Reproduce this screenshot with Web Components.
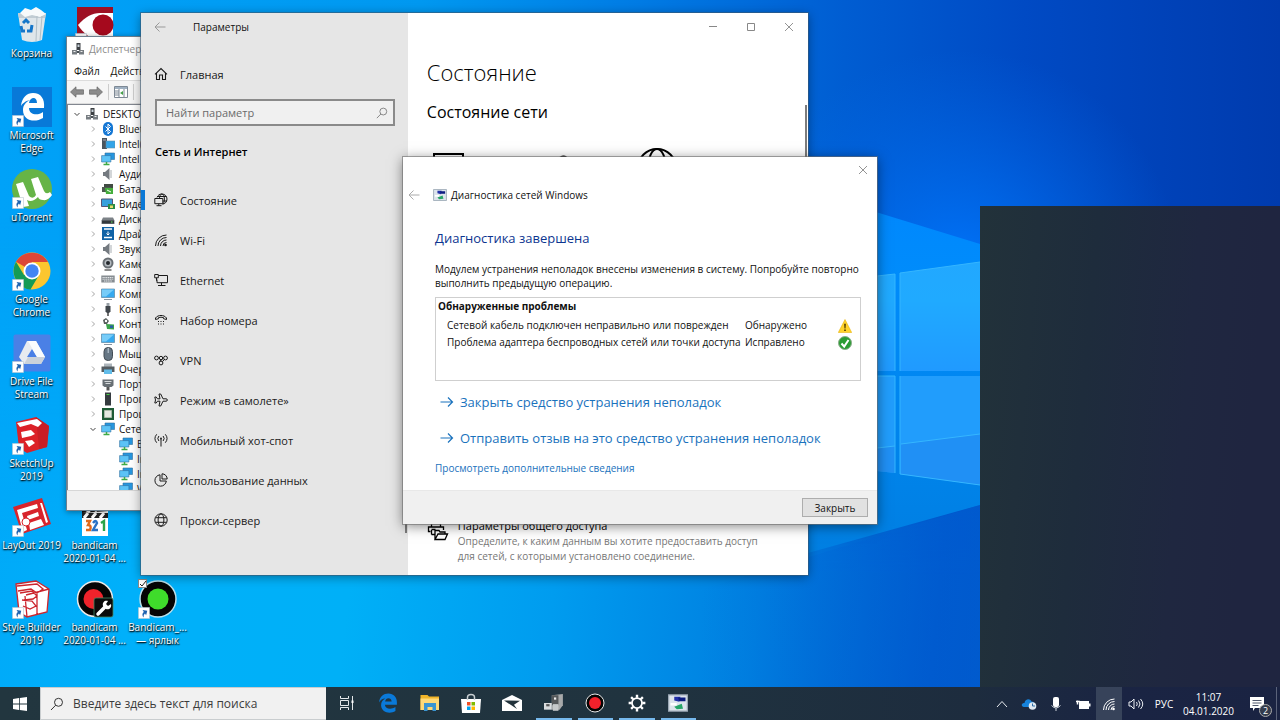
<!DOCTYPE html>
<html lang="ru">
<head>
<meta charset="utf-8">
<title>Рабочий стол</title>
<style>
html, body { margin: 0; height: 100%; overflow: hidden; }
body { font-family: "Open Sans", "Noto Sans", sans-serif; font-size: 11px; color: #111; }
</style>
</head>
<body>
<desk-shell></desk-shell>
<script>
const ICONS = {
  back: ['0 0 12 12', '<path d="M11.5 6H1M5.500 1.500 1 6l4.500 4.500" fill="none" stroke="currentColor"/>'],
  min: ['0 0 10 10', '<path d="M1 4.500h8" stroke="currentColor"/>'],
  max: ['0 0 10 10', '<path d="M1.500 1.500h7v7h-7z" fill="none" stroke="currentColor"/>'],
  close: ['0 0 10 10', '<path d="m1 1 8 8m0-8-8 8" fill="none" stroke="currentColor" stroke-width=".9"/>'],
  home: ['0 0 14 14', '<path d="M1 7.300 7 1.500l6 5.800M2.500 6v6.500h3V8h3v4.500h3V6" fill="none" stroke="currentColor" stroke-width="1.100"/>'],
  search: ['0 0 14 14', '<circle cx="8.500" cy="5.300" r="4" fill="none" stroke="currentColor"/><path d="M5.700 8.200 1 13" stroke="currentColor"/>'],
  status: ['0 0 14 14', '<g fill="none" stroke="currentColor"><path d="M3 4.500C3.800 2.200 5.600 1 7.800 1c3 0 5.200 2.200 5.200 5s-2 5-4.500 5.200M5.500 5C5.700 2.600 6.600 1 7.900 1s2.500 2 2.500 5-.7 4.500-1.400 5M3.300 3.500h9M9 8h4"/><path d="M.8 5.500h8v5.200h-8zM2.500 12.700h5M4.800 10.700v2"/></g>'],
  wifi: ['0 0 14 14', '<g fill="none" stroke="currentColor"><path d="M1.500 13A11 11 0 0 1 12.500 2M4 13a8.500 8.500 0 0 1 8.500-8.500M6.500 13a6 6 0 0 1 6-6"/><path d="M9 13a3.500 3.500 0 0 1 3.500-3.500"/></g><circle cx="11.500" cy="12" r="1.300" fill="currentColor"/>'],
  ethernet: ['0 0 14 14', '<g fill="none" stroke="currentColor"><path d="M4.500 2.500h9v7.200H3V6.500M7.500 9.700v2.800M4 12.500h7.500M.7 1.500h3.600v3.300H.7zM2.500 4.800v3"/></g>'],
  dial: ['0 0 14 14', '<path d="M1.500 6.500V5C4 1.600 10 1.600 12.500 5v1.500l-3-.8V4.600a8 8 0 0 0-5 0v1.100z" fill="none" stroke="currentColor"/><path d="M4 8.500h1M6.500 8.500h1M9 8.500h1M4 11h1M6.500 11h1M9 11h1" stroke="currentColor"/>'],
  vpn: ['0 0 14 14', '<g fill="none" stroke="currentColor"><circle cx="2.500" cy="5" r="1.900"/><circle cx="7" cy="5" r="1.700"/><circle cx="11.500" cy="5" r="1.900"/><circle cx="7" cy="10" r="1.900"/><path d="m8.500 6.200-3 2.200M10.300 6.500 8.500 8.600"/></g>'],
  plane: ['0 0 14 14', '<path d="M13.400 7c0-.8-.7-1.200-1.400-1.200H9L6.700 1H5l1 4.800H3.500L2.200 4H.8l.7 3-.7 3h1.400l1.300-1.800H6L5 13h1.700L9 8.200h3c.7 0 1.400-.4 1.400-1.200z" fill="none" stroke="currentColor"/>'],
  hotspot: ['0 0 14 14', '<g fill="none" stroke="currentColor"><path d="M2.700 1.300a6.500 6.500 0 0 0 0 8.400M11.300 1.300a6.500 6.500 0 0 1 0 8.400M4.900 3a3.800 3.800 0 0 0 0 5M9.100 3a3.800 3.800 0 0 1 0 5M7 5.500v8"/></g><circle cx="7" cy="5.500" r=".9" fill="currentColor"/>'],
  data: ['0 0 14 14', '<g fill="none" stroke="currentColor"><path d="M6 1.800A5.700 5.700 0 1 0 12.300 8H6z"/><path d="M8 .8V6h5.200A5.200 5.200 0 0 0 8 .8z"/></g>'],
  globe: ['0 0 14 14', '<g fill="none" stroke="currentColor"><circle cx="7" cy="7" r="6.200"/><ellipse cx="7" cy="7" rx="2.900" ry="6.200"/><path d="M1.500 4.700h11M1.500 9.300h11"/></g>'],
  laptopBig: ['0 0 32 24', '<path d="M1 21V1h29v20" fill="none" stroke="#000" stroke-width="2"/>'],
  routerBig: ['0 0 20 20', '<path d="M2 5Q10-4 16 5v12H2z" fill="#000"/>'],
  globeBig: ['0 0 40 40', '<g fill="none" stroke="#000" stroke-width="2"><circle cx="20" cy="20" r="19"/><ellipse cx="20" cy="20" rx="9" ry="19"/><path d="M4 11h32M1 20h38"/></g>'],
  share: ['0 0 22 20', '<g fill="none" stroke="#000" stroke-width="1.300"><path d="M4.500 5V1.500h9V5M3.500 9.500H1.500v-4.500h15v3M4.500 7.500h4"/><path d="M4.500 12.500H8M4.500 8v4.500"/><path d="M8 17.500v-9h4l1 1.500h5v2M8 17.500l3-5.500h9.500L18 17.500z"/></g>'],
  diag: ['0 0 16 14', '<path d="M.5.500h15v13H.5z" fill="#dde4ec" stroke="#9aa7b4"/><path d="M5 2h5l-1 4-4-1z" fill="#2230a8"/><path d="M8 2.500h6v3H9z" fill="#0c1c80"/><path d="M5 10 11 7.500l1 4-5 .5z" fill="#27a567"/><path d="M2 7h5v2H2z" fill="#fff"/>'],
  goarrow: ['0 0 14 12', '<path d="M.5 6h12M8 1.500 12.500 6 8 10.500" fill="none" stroke="currentColor" stroke-width="1.200"/>'],
  warn: ['0 0 14 14', '<path d="M7 .5 13.700 13.500H.3z" fill="#ffd32c" stroke="#e8b410" stroke-width=".6"/><path d="M6.200 4.800h1.600L7.500 9.500h-1zM6.200 10.500h1.600V12H6.200z" fill="#443000"/>'],
  ok: ['0 0 14 14', '<circle cx="7" cy="7" r="6.500" fill="#2b9c33" stroke="#8cae8c"/><path d="m3.500 7.500 2.700 3L10.500 4" fill="none" stroke="#fff" stroke-width="2"/>'],
  fwdGrey: ['0 0 14 12', '<path d="M13.500 6 8 .8v3H.5v4.400H8v3z" fill="#8b8b8b" stroke="#666" stroke-width=".7"/>'],
  backGrey: ['0 0 14 12', '<path d="M.5 6 6 .8v3h7.500v4.400H6v3z" fill="#8b8b8b" stroke="#666" stroke-width=".7"/>'],
  panel: ['0 0 14 12', '<path d="M.5.500h13v11H.5z" fill="#fff" stroke="#7d8894"/><path d="M1 1h12v2H1z" fill="#9fb0c1"/><path d="M5 3v8M5 5H1M5 7H1M5 9H1M10 3v8" stroke="#7d8894"/><path d="m9 5-3 2 3 2z" fill="#43a047"/>'],
  pc: ['0 0 14 14', '<path d="M5.500 1h4v7h-4z" fill="#3b3f43"/><path d="M6.500 2.500h2V5h-2z" fill="#c9d3da"/><path d="M1 8h5v4.500H1zM8 8h5v4.500H8z" fill="#777d82"/><path d="M6 9h2v2H6z" fill="#4b5054"/><path d="M2.500 9.500h2M9.500 9.500h2" stroke="#eee"/>'],
  bt: ['0 0 14 14', '<rect x="2" y="0" width="10" height="14" rx="5" fill="#1577d4"/><path d="m4.500 4.500 5 5L7 12V2l2.500 2.500-5 5" fill="none" stroke="#fff"/>'],
  mon: ['0 0 14 14', '<path d="M.5 2h13v8.500H.5z" fill="#36a9ef" stroke="#5c88a5" stroke-width=".7"/><path d="M1 2.500h12L5 9.500H1z" fill="#77ccf8"/><path d="M3 12.500h8" stroke="#8995a0"/>'],
  tower: ['0 0 14 14', '<path d="M1 1h5v11H1z" fill="#4a555e"/><path d="M2 3h3" stroke="#aab"/><path d="M5 4h9v7H5z" fill="#33a4e8" stroke="#6690aa" stroke-width=".6"/>'],
  net: ['0 0 14 14', '<path d="M4 1h9.500v6.500H4z" fill="#2696df" stroke="#306f9d" stroke-width=".6"/><path d="M.6 3.600h9.300V10H.6z" fill="#5cc3f6" stroke="#306f9d" stroke-width=".6"/><path d="M5.500 10v2M2.500 12.500h6" stroke="#3faa47" stroke-width="1.500"/>'],
  speaker: ['0 0 14 14', '<path d="M2 5h2l4.500-4v12L4 9H2z" fill="#747a80"/><path d="M10 3v8" stroke="#a7adb2"/>'],
  battery: ['0 0 14 14', '<path d="M3 2h9v4H3z" fill="#414b43"/><path d="M1 5h9v5H1z" fill="#4e5a50"/><path d="M4 6h8v6H5z" fill="#46ae3d"/><path d="m6 8 4 2" stroke="#fff"/>'],
  video: ['0 0 14 14', '<path d="M.5 2h11v7.500H.5z" fill="#34a0dd" stroke="#557"/><path d="M7 7h7v5H7z" fill="#2a8b44"/><path d="M9 8.500h3V11H9z" fill="#e9d96f"/>'],
  disk: ['0 0 14 14', '<path d="M2 5.500h10l1.500 3V12H.5V8.500z" fill="#7c8287"/><path d="M1 8.500h12v3H1z" fill="#34383c"/><path d="M10 10h1.500" stroke="#6e6"/>'],
  driver: ['0 0 14 14', '<path d="M1 0h12v13H1z" fill="#1163a6"/><path d="M3 2h8M3 10.500h8" stroke="#fff" stroke-width="1.500"/><path d="M7 4.500v3M5.500 6.500 7 8l1.500-1.500" stroke="#fff" fill="none"/>'],
  cam: ['0 0 14 14', '<circle cx="7" cy="6" r="5.500" fill="#686e73"/><circle cx="7" cy="6" r="3.500" fill="#b5bbc0"/><circle cx="7" cy="6" r="2" fill="#24282c"/><path d="M3.500 13h7" stroke="#666" stroke-width="1.500"/>'],
  kbd: ['0 0 14 14', '<path d="M.3 3.500h13.400v7H.3z" fill="#868c91"/><path d="M1.500 5.500h11M1.500 7.200h11M3 9h8" stroke="#e1e4e6" stroke-dasharray="1.300 .5"/>'],
  usb: ['0 0 14 14', '<path d="M5.500 1h3v3h-3z" fill="#98a0a6"/><path d="M4.500 4h5v5.500L8 11H6l-1.500-1.500z" fill="#41474c"/><path d="M7 11v3" stroke="#444" stroke-width="1.500"/>'],
  ctrl: ['0 0 14 14', '<path d="m2 3 3-2 3 3-2 3H3z" fill="#565d5a"/><circle cx="5" cy="4" r="1.200" fill="#fff"/><path d="m5 7 8 .5v5L6 12z" fill="#3aa24a"/><path d="M9 8.500h3V11H9z" fill="#2a5ea8"/>'],
  mouse: ['0 0 14 14', '<rect x="3" y=".5" width="8.500" height="13" rx="4" fill="#667684" stroke="#424b53"/><path d="M7.200 1v5" stroke="#c7d3dc"/>'],
  printer: ['0 0 14 14', '<path d="M3 1.500h8V5H3z" fill="#aeb6bc"/><path d="M.5 4.500h13v5.500H.5z" fill="#555c61"/><path d="M3 7.500h8V12H3z" fill="#62bdea"/>'],
  port: ['0 0 14 14', '<path d="M1.500 2.500h11v6l-2 1.500h-7l-2-1.500z" fill="#686f74"/><path d="M3.500 4.500h7M4.500 6.500h5" stroke="#d4d8da"/><path d="M7 10v3.500" stroke="#555" stroke-width="3"/>'],
  soft: ['0 0 14 14', '<path d="M4 .5h6v13H4z" fill="#353b3f"/><path d="M5.500 2.500h3" stroke="#4ad04a"/>'],
  cpu: ['0 0 14 14', '<path d="M1 1h12v12H1z" fill="#1f5b35"/><path d="M3.500 3.500h7v7h-7z" fill="#e4e9e0" stroke="#a9b9a6"/>'],
  chev: ['0 0 8 8', '<path d="m3 1.500 2.500 2.500L3 6.500" fill="none" stroke="#999" stroke-width=".9"/>'],
  chevDown: ['0 0 8 8', '<path d="m1.500 3 2.500 2.500L6.500 3" fill="none" stroke="#444"/>'],
  bin: ['0 0 40 40', '<path d="M6 8h28l-4 27q-10 4-20 0z" fill="#dfe6ea"/><path d="M6 8h28l-1 5H7z" fill="#c1ccd3"/><path d="m8 8 5-5 6 2 5-3 5 3 5 4-6 3-8-2-7 2z" fill="#f7fafb"/><path d="M25 11l-1 25M30 11l-2 24" stroke="#b3c0c8"/><g fill="none" stroke="#1476c9" stroke-width="3"><path d="m11 18 3-3 3 3M20 20l-1 6h-4M9 21l1 5h3"/></g>'],
  abbyy: ['0 0 40 40', '<path d="M2 2h36v38H2z" fill="#9e1023"/><path d="M3 20C10 12 17 8 25 8h13v28H27C16 35 8 28 3 20z" fill="#fff"/><circle cx="28" cy="20" r="10.500" fill="#a5091d"/>'],
  edgeTile: ['0 0 40 40', '<path d="M0 0h40v40H0z" fill="#0879d8"/><path d="M9 19C10 10 15 6 21 6c8 0 12 6 11 15H17c0 7 9 8 14 4v6c-8 5-20 3-20-8 0-5 3-8 7-10-5 1-8 4-9 6zm8-3h8c0-7-7-6-8 0z" fill="#fff"/>'],
  utorrent: ['0 0 40 40', '<circle cx="20" cy="20" r="20" fill="#66b447"/><path d="m4 15 7-2 6 14q4 4 7-1L19 10l7-2 6 14q2 4 6 1l2 3q-4 6-9 5-4 0-5-3-6 6-11 3l2 6-6 1z" fill="#fff"/>'],
  chrome: ['0 0 40 40', '<circle cx="20" cy="20" r="18.500" fill="#fbc62f"/><path d="M20 20 4 10.800A18.500 18.500 0 0 1 36 11H20z" fill="#dc4637"/><path d="M4 10.800A18.500 18.500 0 0 0 18.500 38.400L27 24 20 20 12 24z" fill="#149b56"/><circle cx="20" cy="20" r="8.500" fill="#fff"/><circle cx="20" cy="20" r="6.700" fill="#4285f4"/>'],
  drive: ['0 0 40 40', '<rect x="1.500" y="1.500" width="37" height="37" rx="2" fill="#4a80e6"/><path d="M15 8h9l9 16-4 7H12l-5-7z" fill="#e7ebf0"/><path d="m20 16 5 8H15z" fill="#4a80e6"/><path d="m24 8 9 16h-8l-9-16z" fill="#fafcfd"/><path d="m12 31 4-7h17l-4 7z" fill="#cbd2da"/>'],
  sketchup: ['0 0 40 40', '<path d="m4 7 20-5 13 9-2 21-20 6-8-5z" fill="#dc2128"/><path d="m24 2 13 9-2 21-8 2z" fill="#c91d25"/><path d="m5 8 20-4 5 4-4 4-7-3-11 3zM9 17l10-2 4 4-4 2-9 2zM13 26l7-1 3 3-6 4z" fill="#fff"/>'],
  layout: ['0 0 40 40', '<path d="m1 10 29-9 9 26-29 10z" fill="#d8242c"/><path d="m5 13 20-6 1 4-16 5 5 17-4 2zM15 19l11-4 1 4-11 4zM17 26l12-4 3 6-14 5zM28 6l2 0 6 19-2 1z" fill="#fff"/><circle cx="14" cy="25" r="4" fill="#fff" stroke="#d8242c"/>'],
  style: ['0 0 40 40', '<path d="m4 5 20-3 13 8-2 23-20 5-8-5z" fill="#fff"/><g fill="none" stroke="#cc252d" stroke-width="1.300"><path d="m4 5 20-3 13 8-2 23-20 5-8-5zM5 7l20-2 6 5-6 4-6-4-13 2M8 14l12-2 5 5-4 3-9 1M10 21l10 1 4 5-6 3-7-3M37 10 14 16M13 17l2 21M25 14v21"/></g>'],
  clip321: ['0 0 40 40', '<path d="M7 9h26v30H7z" fill="#fff"/><path d="m7 12 26-5v7l-26 2z" fill="#111"/><path d="m10 12 5 3M17 11l5 3M24 9l6 4" stroke="#fff" stroke-width="3"/><path d="M7 16h26v5H7z" fill="#222"/><path d="m9 21 4-5M17 21l4-5M25 21l4-5" stroke="#fff" stroke-width="3"/><g fill="none" stroke-width="2.400"><path d="M11 24h4l-2 4q4 0 2 5h-4" stroke="#e16a1b"/><path d="M18 26q3-4 4 0l-4 7h5" stroke="#2b72c4"/><path d="m26 26 3-2v10" stroke="#2aa449"/></g>'],
  rec: ['0 0 40 40', '<circle cx="20" cy="20" r="18" fill="#050505" stroke="#e9e9e9" stroke-width="2"/><circle cx="20" cy="20" r="12" fill="#f2212b"/>'],
  recTool: ['0 0 40 40', '<circle cx="20" cy="20" r="17.500" fill="#050505" stroke="#e9e9e9" stroke-width="1.500"/><circle cx="18.500" cy="20" r="10" fill="#ef232b"/><rect x="19" y="19" width="19" height="19" rx="2" fill="#0b0b0b" stroke="#486" stroke-width=".8"/><path d="m23 35 7-7" stroke="#fff" stroke-width="3.500" stroke-linecap="round"/><path d="M28 27c-1-4 2-6 5-5l-2 3 2 2 3-2c1 4-2 6-5 5z" fill="#fff"/>'],
  recGreen: ['0 0 40 40', '<circle cx="20" cy="20" r="18" fill="#050505" stroke="#b9dfea" stroke-width="1.500"/><circle cx="20" cy="20" r="10.500" fill="#3fdc2b"/>'],
  link: ['0 0 12 12', '<path d="M.5.500h11v11H.5z" fill="#fff" stroke="#b8c6d2" stroke-width=".6"/><path d="M3 9.500C3 6.500 4.500 5 6.500 5V2.800L10 6 6.500 9V7Q4.500 7 3 9.500z" fill="#1e63b0" transform="rotate(-35 6 6)"/>'],
  win: ['0 0 14 14', '<path d="m0 2 6-.9v5.500H0zM6.800 1 14 0v6.600H6.800zM0 7.400h6v5.500L0 12zM6.800 7.400H14V14l-7.200-1z" fill="#fff"/>'],
  taskview: ['0 0 16 14', '<g fill="none" stroke="#e4e8ea"><path d="M1.500 0v2.500h8V0M1.500 4.500h8v5h-8zM1.500 14v-2.500h8V14M13.500 0v14"/></g><path d="M12.500 4.500h2v2.500h-2z" fill="#fff"/>'],
  edge: ['0 0 18 18', '<path d="M1 8.500C1.500 3 5 .5 9.300.5c5 0 8 3.500 7.700 8.500v1.500H6.200c.3 4 5.500 4.500 9.500 2.200v3.600C11 19 3.500 18 2.800 11.500 2.600 8.500 4 6.300 6.500 5 4 5.200 2.200 6.300 1 8.500zM6.400 7.700h5.900c-.1-4-5.500-4-5.900 0z" fill="#0a79d8"/>'],
  folder: ['0 0 20 16', '<path d="M.5 0h7l1.500 1.500h10V15H.5z" fill="#f0b429"/><path d="M.5 3.500h18.500V15H.5z" fill="#ffd977"/><path d="M4 8h12v8h-3.500v-4h-5v4H4z" fill="#3a95d2"/>'],
  store: ['0 0 20 20', '<path d="M0 6h20l-1 14H1z" fill="#fff"/><path d="M6.500 7V4.500c0-4 7-4 7 0V7" fill="none" stroke="#c8ced1" stroke-width="1.500"/><path d="M6 9h3.500v3.500H6z" fill="#f04f24"/><path d="M10.500 9H14v3.500h-3.500z" fill="#80bb00"/><path d="M6 13.500h3.500V17H6z" fill="#00a3ef"/><path d="M10.500 13.500H14V17h-3.500z" fill="#ffb900"/>'],
  mail: ['0 0 20 16', '<path d="M0 5 10 0l10 5v11H0z" fill="#fff"/><path d="m2 5.500 16 .2-6 4.100 3 4.200z" fill="#20313a"/>'],
  devmgr: ['0 0 18 16', '<path d="M7 1 17 0v10l-3 4H7z" fill="#a7a9aa"/><path d="M7 1h6v9H7z" fill="#55585a"/><path d="M9 3h2v2H9z" fill="#eee"/><path d="M0 8h7v6H0z" fill="#d9dcde"/><path d="M8 9h5v6H8z" fill="#c6c9ca"/><path d="M2 10h3" stroke="#555" stroke-width="2"/>'],
  gear: ['0 0 16 16', '<circle cx="8" cy="8" r="4" fill="none" stroke="#fff" stroke-width="1.400"/><path d="M8 1.300v2.500M8 12.200v2.500M1.300 8h2.500M12.200 8h2.500M3.300 3.300 5 5M11 11l1.700 1.700M3.300 12.700 5 11M11 5l1.700-1.700" stroke="#fff" stroke-width="1.900"/>'],
  up: ['0 0 12 8', '<path d="m1 7 5-5.500L11 7" fill="none" stroke="#e8ecf0"/>'],
  onedrive: ['0 0 16 12', '<path d="M3 9C-.5 8.500.5 4.500 3.500 5 4 1 9 0 10.500 3.500 13 3.500 14 5 13.500 9z" fill="#1683dc"/><circle cx="11.500" cy="8" r="3.800" fill="#dfe8f0"/><path d="M11.500 5.500V8H14" stroke="#2c6ca5" fill="none"/>'],
  mic: ['0 0 12 16', '<rect x="3" y="1" width="6" height="10" rx="2" fill="#fff"/><path d="M1.500 9.500q4.500 5 9 0M6 12v3" stroke="#ccd2da" fill="none"/>'],
  batt: ['0 0 16 12', '<path d="M4 3h10v8H4z" fill="#fff"/><path d="M14 5.500h1.500v3H14z" fill="#fff"/><path d="M2.500 2.500v4M1 3.500h4" stroke="#fff" stroke-width="1.500"/>'],
  volume: ['0 0 16 14', '<path d="M1 5h2l3-3v10L3 9H1zM8.500 5q1.500 2 0 4M10.500 3.500q3 3.500 0 7M12.500 2q4.500 5 0 10" fill="none" stroke="#eceff3"/>'],
  note: ['0 0 16 16', '<path d="M1 1h14v11H6l-2 3v-3H1z" fill="#fff"/><path d="M3.500 4.500h9M3.500 7h9M3.500 9.500h6" stroke="#26304a" stroke-width=".8"/>']
};

const define = (tag, css, html, after) => customElements.define(tag, class extends HTMLElement {
  connectedCallback() {
    if (this.shadowRoot) return;
    const root = this.attachShadow({ mode: 'open' });
    const body = typeof html === 'function' ? html(this) : html;
    root.innerHTML = '<style>*{box-sizing:border-box}h1,h2,h3,p,ul{margin:0;padding:0}ul{list-style:none}button,input{font:inherit;color:inherit;margin:0;padding:0;border:0;background:none;border-radius:0}button{display:flex;align-items:center;justify-content:center}a{color:inherit;text-decoration:none}' + css + '</style>' + body;
    if (after) after(root, this);
  }
});

define('ui-icon',
  ':host{display:inline-block;flex:none;width:14px;height:14px}svg{display:block;width:100%;height:100%}',
  el => { const [box, art] = ICONS[el.getAttribute('name')]; return `<svg viewBox="${box}" aria-hidden="true">${art}</svg>`; });

define('desk-wallpaper',
  ':host{display:block;overflow:hidden}svg{display:block;width:100%;height:100%}',
  `<svg viewBox="0 0 1280 720" preserveAspectRatio="xMidYMid slice" aria-hidden="true">
  <defs>
    <linearGradient id="sky" x1="0" y1="0" x2="1" y2="0"><stop offset="0" stop-color="#00a2f8"/><stop offset=".33" stop-color="#0098f0"/><stop offset=".5" stop-color="#007be4"/><stop offset=".66" stop-color="#005dd2"/><stop offset=".8" stop-color="#004ac4"/><stop offset="1" stop-color="#003bae"/></linearGradient>
    <linearGradient id="low" x1="0" y1="0" x2="1" y2=".06"><stop offset="0" stop-color="#00a8f8"/><stop offset=".15" stop-color="#00b0fa"/><stop offset=".32" stop-color="#00b0f7"/><stop offset=".48" stop-color="#009cef"/><stop offset=".64" stop-color="#007fe0"/><stop offset=".78" stop-color="#0058cc"/><stop offset="1" stop-color="#0048b8"/></linearGradient>
    <linearGradient id="fade" x1="0" y1="0" x2="0" y2="1"><stop offset=".3" stop-color="#000"/><stop offset=".8" stop-color="#fff"/></linearGradient>
    <mask id="m"><path d="M0 0h1280v720H0z" fill="url(#fade)"/></mask>
    <radialGradient id="glow" gradientUnits="userSpaceOnUse" cx="960" cy="270" r="220"><stop offset="0" stop-color="#0078ff" stop-opacity=".9"/><stop offset="1" stop-color="#006bea" stop-opacity="0"/></radialGradient>
    <linearGradient id="pane" x1="0" y1="0" x2="0" y2="1"><stop offset="0" stop-color="#22a8ff"/><stop offset=".35" stop-color="#20aaff"/><stop offset="1" stop-color="#209aff"/></linearGradient>
    <linearGradient id="beam" x1="0" y1="0" x2="0" y2="1"><stop offset="0" stop-color="#0085ff"/><stop offset=".3" stop-color="#008cfb"/><stop offset="1" stop-color="#007fe2"/></linearGradient>
    <linearGradient id="dusk" x1="0" y1="0" x2="1" y2="0"><stop offset="0" stop-color="#0060d4" stop-opacity="0"/><stop offset="1" stop-color="#0060d4" stop-opacity=".45"/></linearGradient>
  </defs>
  <path d="M0 0h1280v720H0z" fill="url(#sky)"/>
  <path d="M0 0h1280v720H0z" fill="url(#low)" mask="url(#m)"/>
  <path d="M700 0h580v600H700z" fill="url(#glow)"/>
  <path d="M700 158 980 244v261L808 553H700z" fill="url(#beam)"/>
  <path d="m700 590 280-85v182H700z" fill="url(#dusk)"/>
  <path d="m877 276 18-2v97h-18zM900 273l80-11v109h-80z" fill="url(#pane)"/>
  <path d="M877 376h18v97l-18-2zM900 376h80v109l-80-11z" fill="#219dfc"/>
  <path d="m877 448 18-2v27l-18-2zM901 444l79-10v51l-79-11z" fill="#2090f5"/>
  <path d="m877 448 18-2M901 444l79-10M877 276l18-2v97M900 371v-98l80-11M877 376h18v97M900 376v98l80 11" fill="none" stroke="#35b6ff"/>
</svg>`);

define('desk-icon',
  `:host{display:block;min-width:0}
   a{position:relative;display:flex;flex-direction:column;align-items:center;gap:2px}
   .pic{position:relative;width:40px;height:40px}
   .pic>ui-icon{width:40px;height:40px}
   .pic .lnk{position:absolute;left:0;bottom:0;width:12px;height:12px}
   input{position:absolute;left:0;top:0;width:9px;height:9px;margin:0;appearance:none;background:#fff;border:1px solid #888;overflow:visible}
   .tick{position:absolute;left:1px;top:1px;width:8px;height:8px;pointer-events:none}
   span{white-space:pre-line;text-align:center;font-size:10px;line-height:13px;color:#fff;text-shadow:0 1px 2px #000,1px 1px 1px rgba(0,0,0,.7)}`,
  el => `<a href="#"><div class="pic"><ui-icon name="${el.getAttribute('icon')}"></ui-icon>${el.hasAttribute('link') ? '<ui-icon class="lnk" name="link"></ui-icon>' : ''}${el.hasAttribute('checked') ? '<input type="checkbox" checked aria-label="Выбрать ярлык"><svg class="tick" viewBox="0 0 8 8"><path d="m1 4 2 2 4-5" fill="none" stroke="#222"/></svg>' : ''}</div><span><slot></slot></span></a>`);

define('tree-row',
  `:host{display:flex;align-items:center;height:15px;gap:4px;padding-left:21px;font-size:10px;white-space:nowrap}
   :host([level="0"]){padding-left:5px}:host([level="2"]){padding-left:51px}
   ui-icon{width:14px;height:14px}.c{width:8px;height:8px}
   :host([level="2"]) .c{display:none}`,
  el => `<ui-icon class="c" name="${el.hasAttribute('open') ? 'chevDown' : 'chev'}"></ui-icon><ui-icon name="${el.getAttribute('icon')}"></ui-icon><slot></slot>`);

const rows = [
  [0,'pc','DESKTOP',1],[1,'bt','Bluetooth'],[1,'tower','Intel(R)'],[1,'net','Intel WiUSB'],[1,'speaker','Аудио'],[1,'battery','Батареи'],
  [1,'video','Видео'],[1,'disk','Диски'],[1,'driver','Драйвер'],[1,'speaker','Звуковые'],[1,'cam','Камеры'],[1,'kbd','Клавиши'],
  [1,'mon','Компьютер'],[1,'usb','Контроллер'],[1,'ctrl','Контроллер'],[1,'mon','Мониторы'],[1,'mouse','Мыши'],[1,'printer','Очереди'],
  [1,'port','Порты'],[1,'soft','Прогр.'],[1,'cpu','Процес.'],[1,'net','Сетевые',1],[2,'net','Blue'],[2,'net','Intel'],[2,'net','Intel'],[2,'net','WAN']
];
define('device-manager',
  `:host{display:flex;flex-direction:column;background:#fff;border:1px solid #6d7f8e;box-shadow:0 1px 6px rgba(0,0,0,.4);overflow:hidden}
   header{display:flex;align-items:center;gap:4px;height:24px;padding-left:4px;color:#8b8b8b;font-size:10px}
   header ui-icon{width:14px}
   nav{display:flex;align-items:center;gap:11px;height:19px;padding-left:7px;font-size:10px}
   .tools{display:flex;align-items:center;gap:5px;height:24px;padding-left:3px;background:#f5f5f5;border:solid #dcdcdc;border-width:1px 0}
   .tools i{width:1px;height:16px;background:#ccc}
   .tree{flex:1;overflow:hidden;border:1px solid #828790;border-bottom:0;background:#fff;min-height:0;padding-top:1px}
   footer{height:20px;background:#f0f0f0;border-top:1px solid #d7d7d7}`,
  `<header><ui-icon name="pc"></ui-icon><span>Диспетчер</span></header>
   <nav><button>Файл</button><button>Действие</button></nav>
   <div class="tools"><button aria-label="Назад"><ui-icon name="backGrey"></ui-icon></button><button aria-label="Вперед"><ui-icon name="fwdGrey"></ui-icon></button><i></i><button aria-label="Панель"><ui-icon name="panel"></ui-icon></button><i></i></div>
   <div class="tree">${rows.map(r => `<tree-row level="${r[0]}" icon="${r[1]}" ${r[3] ? 'open' : ''}>${r[2]}</tree-row>`).join('')}</div>
   <footer></footer>`);

define('nav-item',
  `:host{display:block}
   a{display:flex;align-items:center;gap:12px;height:40px;padding-left:13px;font-size:11px;color:#1a1a1a}
   :host([current]) a{background:linear-gradient(#0a78d6,#0a78d6) left center/4px 20px no-repeat}`,
  el => `<a href="#"><ui-icon name="${el.getAttribute('icon')}"></ui-icon><slot></slot></a>`);

define('settings-window',
  `:host{display:flex;background:#fff;box-shadow:0 0 0 1px rgba(60,90,115,.6),0 2px 10px rgba(0,0,0,.4);overflow:hidden}
   aside{position:relative;width:40%;background:#e6e6e6;flex:none}
   .title{display:flex;align-items:center;gap:26px;height:27px;padding-left:13px;font-size:10px}
   .title button{color:#999}.title button ui-icon{width:12px;height:12px;margin-right:1px}
   .home{padding-top:14px}
   .find{position:relative;display:flex;align-items:center;height:27px;margin:5px 13px 0 14px;border:2px solid #8a8a8a;background:#f0f0f0;padding:0 5px 0 9px}
   .find input{flex:1;min-width:0;outline:none;font-size:11px}
   .find input::placeholder{color:#6b6b6b;opacity:1}
   .find ui-icon{width:12px;height:12px;color:#777}
   h2.cat{font-size:11px;line-height:20px;font-weight:600;color:#000;padding-left:14px;margin:16px 0 18px}
   .sb{position:absolute;width:2px;background:#7c7c7c;right:1px}
   aside .sb{top:200px;bottom:42px}
   main{position:relative;flex:1;min-width:0;display:flex;flex-direction:column}
   main .sb{top:92px;bottom:220px}
   .ctl{display:flex;justify-content:flex-end;height:27px;color:#888}
   .ctl button{width:38px;height:27px}.ctl ui-icon{width:10px;height:10px}
   h1{font-size:22px;line-height:30px;font-weight:300;color:#000;margin:17px 19px 0}
   h2.sub{font-size:16px;line-height:24px;font-weight:400;color:#000;margin:13px 19px 0}
   .map{display:flex;justify-content:space-between;align-items:flex-start;width:61%;margin:24px 0 0 25px}
   .map .l{width:32px;height:24px;margin-top:5px}.map .r{width:20px;height:20px;margin:7px 0 0 26px}.map .g{width:40px;height:40px}
   .share{display:flex;gap:9px;margin:auto 39px 11px 19px;align-items:flex-start}
   .share ui-icon{width:22px;height:20px;margin-top:4px}
   .share h3{font-size:11px;line-height:16px;font-weight:400;color:#000}
   .share p{font-size:10px;line-height:15px;color:#777}`,
  `<aside>
     <div class="title"><button aria-label="Назад"><ui-icon name="back"></ui-icon></button><span>Параметры</span></div>
     <div class="home"><nav-item icon="home">Главная</nav-item></div>
     <label class="find"><input type="text" placeholder="Найти параметр" aria-label="Найти параметр"><ui-icon name="search"></ui-icon></label>
     <h2 class="cat">Сеть и Интернет</h2>
     <nav>
       <nav-item icon="status" current>Состояние</nav-item>
       <nav-item icon="wifi">Wi-Fi</nav-item>
       <nav-item icon="ethernet">Ethernet</nav-item>
       <nav-item icon="dial">Набор номера</nav-item>
       <nav-item icon="vpn">VPN</nav-item>
       <nav-item icon="plane">Режим «в самолете»</nav-item>
       <nav-item icon="hotspot">Мобильный хот-спот</nav-item>
       <nav-item icon="data">Использование данных</nav-item>
       <nav-item icon="globe">Прокси-сервер</nav-item>
     </nav>
     <div class="sb"></div>
   </aside>
   <main>
     <div class="ctl"><button aria-label="Свернуть"><ui-icon name="min"></ui-icon></button><button aria-label="Развернуть"><ui-icon name="max"></ui-icon></button><button aria-label="Закрыть окно"><ui-icon name="close"></ui-icon></button></div>
     <h1>Состояние</h1>
     <h2 class="sub">Состояние сети</h2>
     <div class="map"><ui-icon class="l" name="laptopBig"></ui-icon><ui-icon class="r" name="routerBig"></ui-icon><ui-icon class="g" name="globeBig"></ui-icon></div>
     <div class="share"><ui-icon name="share"></ui-icon><div><h3>Параметры общего доступа</h3><p>Определите, к каким данным вы хотите предоставить доступ для сетей, с которыми установлено соединение.</p></div></div>
     <div class="sb"></div>
   </main>`);

define('trouble-dialog',
  `:host{display:flex;flex-direction:column;background:#fff;box-shadow:0 0 0 1px rgba(110,110,110,.6),0 2px 12px rgba(0,0,0,.5)}
   .ctl{display:flex;justify-content:flex-end;height:25px;color:#888}
   .ctl button{width:28px}.ctl ui-icon{width:10px;height:10px}
   header{display:flex;align-items:center;height:26px;padding-left:5px;font-size:10px}
   header button{color:#aaa;margin-right:13px}header button ui-icon{width:12px;height:12px}
   header>ui-icon{width:14px;height:12px;margin-right:4px}
   section{flex:1;display:flex;flex-direction:column;align-items:flex-start;padding:20px 16px 0 32px}
   h1{font-size:13px;line-height:20px;font-weight:400;color:#0c3590}
   p{font-size:10px;line-height:14px;margin:14px 0 7px}
   .box{align-self:stretch;height:84px;border:1px solid #cfcfcf;padding:1px 2px;font-size:10px}
   h2{font-size:10px;line-height:15px;font-weight:700}
   table{width:100%;border-collapse:collapse;margin-top:3px}td{padding:0;height:17px;line-height:17px;white-space:nowrap}
   td:first-child{padding-left:9px}td:nth-child(2){width:93px}td:last-child{width:20px}
   td ui-icon{display:block}
   .go{display:flex;align-items:center;gap:6px;font-size:13px;line-height:20px;color:#1a72bd;margin-left:5px}
   .go ui-icon{height:12px}
   .one{margin-top:11px}.two{margin-top:16px}
   .more{font-size:10px;line-height:14px;color:#1a72bd;margin-top:13px}
   footer{display:flex;justify-content:flex-end;align-items:center;height:34px;background:#f0f0f0;border-top:1px solid #e8e8e8;padding-right:9px}
   footer button{width:66px;height:19px;background:#e1e1e1;border:1px solid #adadad;font-size:10px}`,
  `<div class="ctl"><button aria-label="Закрыть мастер"><ui-icon name="close"></ui-icon></button></div>
   <header><button aria-label="Назад"><ui-icon name="back"></ui-icon></button><ui-icon name="diag"></ui-icon><span>Диагностика сетей Windows</span></header>
   <section>
     <h1>Диагностика завершена</h1>
     <p>Модулем устранения неполадок внесены изменения в систему. Попробуйте повторно выполнить предыдущую операцию.</p>
     <div class="box"><h2>Обнаруженные проблемы</h2>
       <table><tbody>
         <tr><td>Сетевой кабель подключен неправильно или поврежден</td><td>Обнаружено</td><td><ui-icon name="warn"></ui-icon></td></tr>
         <tr><td>Проблема адаптера беспроводных сетей или точки доступа</td><td>Исправлено</td><td><ui-icon name="ok"></ui-icon></td></tr>
       </tbody></table></div>
     <a class="go one" href="#"><ui-icon name="goarrow"></ui-icon>Закрыть средство устранения неполадок</a>
     <a class="go two" href="#"><ui-icon name="goarrow"></ui-icon>Отправить отзыв на это средство устранения неполадок</a>
     <a class="more" href="#">Просмотреть дополнительные сведения</a>
   </section>
   <footer><button>Закрыть</button></footer>`);

define('task-button',
  `:host{display:block;height:33px;padding:0 3px;min-width:0}
   button{width:100%;height:100%;border-bottom:2px solid transparent}
   :host([running]) button{border-color:#76b9ed}
   ui-icon{width:20px;height:20px}
   :host([size="s"]) ui-icon{width:16px;height:14px}`,
  el => `<button aria-label="${el.getAttribute('label')}"><ui-icon name="${el.getAttribute('icon')}"></ui-icon></button>`);

define('task-bar',
  `:host{display:flex;height:33px;background:linear-gradient(90deg,#22363f,#20333f 50%,#1d2c3e 76%,#1a2443 88%,#1a2342)}
   .start{width:40px;height:33px;flex:none}
   .find{display:flex;align-items:center;gap:9px;flex:0 1 286px;background:#f1f1f1;padding-left:9px;color:#333;border:1px solid #c9cdcf;border-right:0}
   .find input{flex:1;min-width:0;font-size:12px;outline:none}.find input::placeholder{color:#3c3c3c;opacity:1}
   .apps{display:grid;grid-template-columns:repeat(9,1fr);flex:0 1 373px}
   .tray{display:flex;align-items:stretch;color:#fff;margin-left:auto}
   .tray button{width:27px}.tray .on{background:#37435a;width:26px}
   .tray .lang{width:30px;font-size:10px}
   .tray .clock{width:59px;flex-direction:column;font-size:10px;line-height:14px;justify-content:center}
   .tray .bell{position:relative;width:38px}.bell b{position:absolute;right:4px;top:17px;width:13px;height:13px;border:1px solid #aaa;border-radius:50%;background:#333b4c;font-size:9px;line-height:11px;font-weight:400;text-align:center}
   .edge{width:4px;border-left:1px solid #5a6279}
   .up{width:12px;height:8px}.od{width:16px;height:12px}.mc{width:12px;height:16px}.bt{width:16px;height:12px}.vl{width:16px;height:14px}.nt{width:16px;height:16px}`,
  `<button class="start" aria-label="Пуск"><ui-icon name="win"></ui-icon></button>
   <label class="find"><ui-icon name="search"></ui-icon><input type="text" placeholder="Введите здесь текст для поиска" aria-label="Поиск"></label>
   <div class="apps">
     <task-button size="s" icon="taskview" label="Представление задач"></task-button>
     <task-button icon="edge" label="Edge"></task-button><task-button icon="folder" label="Проводник"></task-button>
     <task-button icon="store" label="Магазин"></task-button><task-button icon="mail" label="Почта"></task-button>
     <task-button icon="devmgr" label="Диспетчер устройств" running></task-button><task-button icon="rec" label="Bandicam" running></task-button>
     <task-button icon="gear" label="Параметры" running></task-button><task-button icon="diag" label="Диагностика" running></task-button>
   </div>
   <div class="tray">
     <button aria-label="Значки"><ui-icon class="up" name="up"></ui-icon></button><button aria-label="OneDrive"><ui-icon class="od" name="onedrive"></ui-icon></button>
     <button aria-label="Микрофон"><ui-icon class="mc" name="mic"></ui-icon></button><button aria-label="Батарея"><ui-icon class="bt" name="batt"></ui-icon></button>
     <button class="on" aria-label="Сеть"><ui-icon name="wifi"></ui-icon></button><button aria-label="Громкость"><ui-icon class="vl" name="volume"></ui-icon></button>
     <button class="lang">РУС</button><button class="clock"><span>11:07</span><span>04.01.2020</span></button>
     <button class="bell" aria-label="Уведомления"><ui-icon class="nt" name="note"></ui-icon><b>2</b></button><div class="edge"></div>
   </div>`);

define('desk-shell',
  `:host{display:grid;grid-template-rows:1fr auto;height:100vh;min-height:0}
   .desk{position:relative;overflow:hidden;min-height:0}
   desk-wallpaper{position:absolute;inset:0 0 -33px 0}
   .icons{position:relative;display:grid;grid-template-columns:repeat(3,63px);grid-auto-rows:82px;padding-top:5px}
   device-manager,settings-window,trouble-dialog,.flyout{position:absolute}
   device-manager{left:66px;top:36px;width:440px;height:475px}
   settings-window{left:141px;top:13px;width:667px;height:562px}
   trouble-dialog{left:403px;top:157px;width:474px;height:367px}
   .flyout{right:0;top:206px;bottom:0;width:300px;background:linear-gradient(95deg,#22323a,#1e2c3c 35%,#1f2740 65%,#1f2540 85%)}`,
  `<div class="desk">
     <desk-wallpaper></desk-wallpaper>
     <div class="icons">
       <desk-icon icon="bin" style="grid-area:1/1">Корзина</desk-icon>
       <desk-icon icon="abbyy" link style="grid-area:1/2"></desk-icon>
       <desk-icon icon="edgeTile" link style="grid-area:2/1">Microsoft
Edge</desk-icon>
       <desk-icon icon="utorrent" link style="grid-area:3/1">uTorrent</desk-icon>
       <desk-icon icon="chrome" link style="grid-area:4/1">Google
Chrome</desk-icon>
       <desk-icon icon="drive" link style="grid-area:5/1">Drive File
Stream</desk-icon>
       <desk-icon icon="sketchup" link style="grid-area:6/1">SketchUp
2019</desk-icon>
       <desk-icon icon="layout" link style="grid-area:7/1">LayOut 2019</desk-icon>
       <desk-icon icon="clip321" style="grid-area:7/2">bandicam
2020-01-04 ...</desk-icon>
       <desk-icon icon="style" link style="grid-area:8/1">Style Builder
2019</desk-icon>
       <desk-icon icon="recTool" style="grid-area:8/2">bandicam
2020-01-04 ...</desk-icon>
       <desk-icon icon="recGreen" link checked style="grid-area:8/3">Bandicam_...
— ярлык</desk-icon>
     </div>
     <device-manager></device-manager>
     <settings-window></settings-window>
     <trouble-dialog></trouble-dialog>
     <div class="flyout"></div>
   </div>
   <task-bar></task-bar>`);
</script>
</body>
</html>
